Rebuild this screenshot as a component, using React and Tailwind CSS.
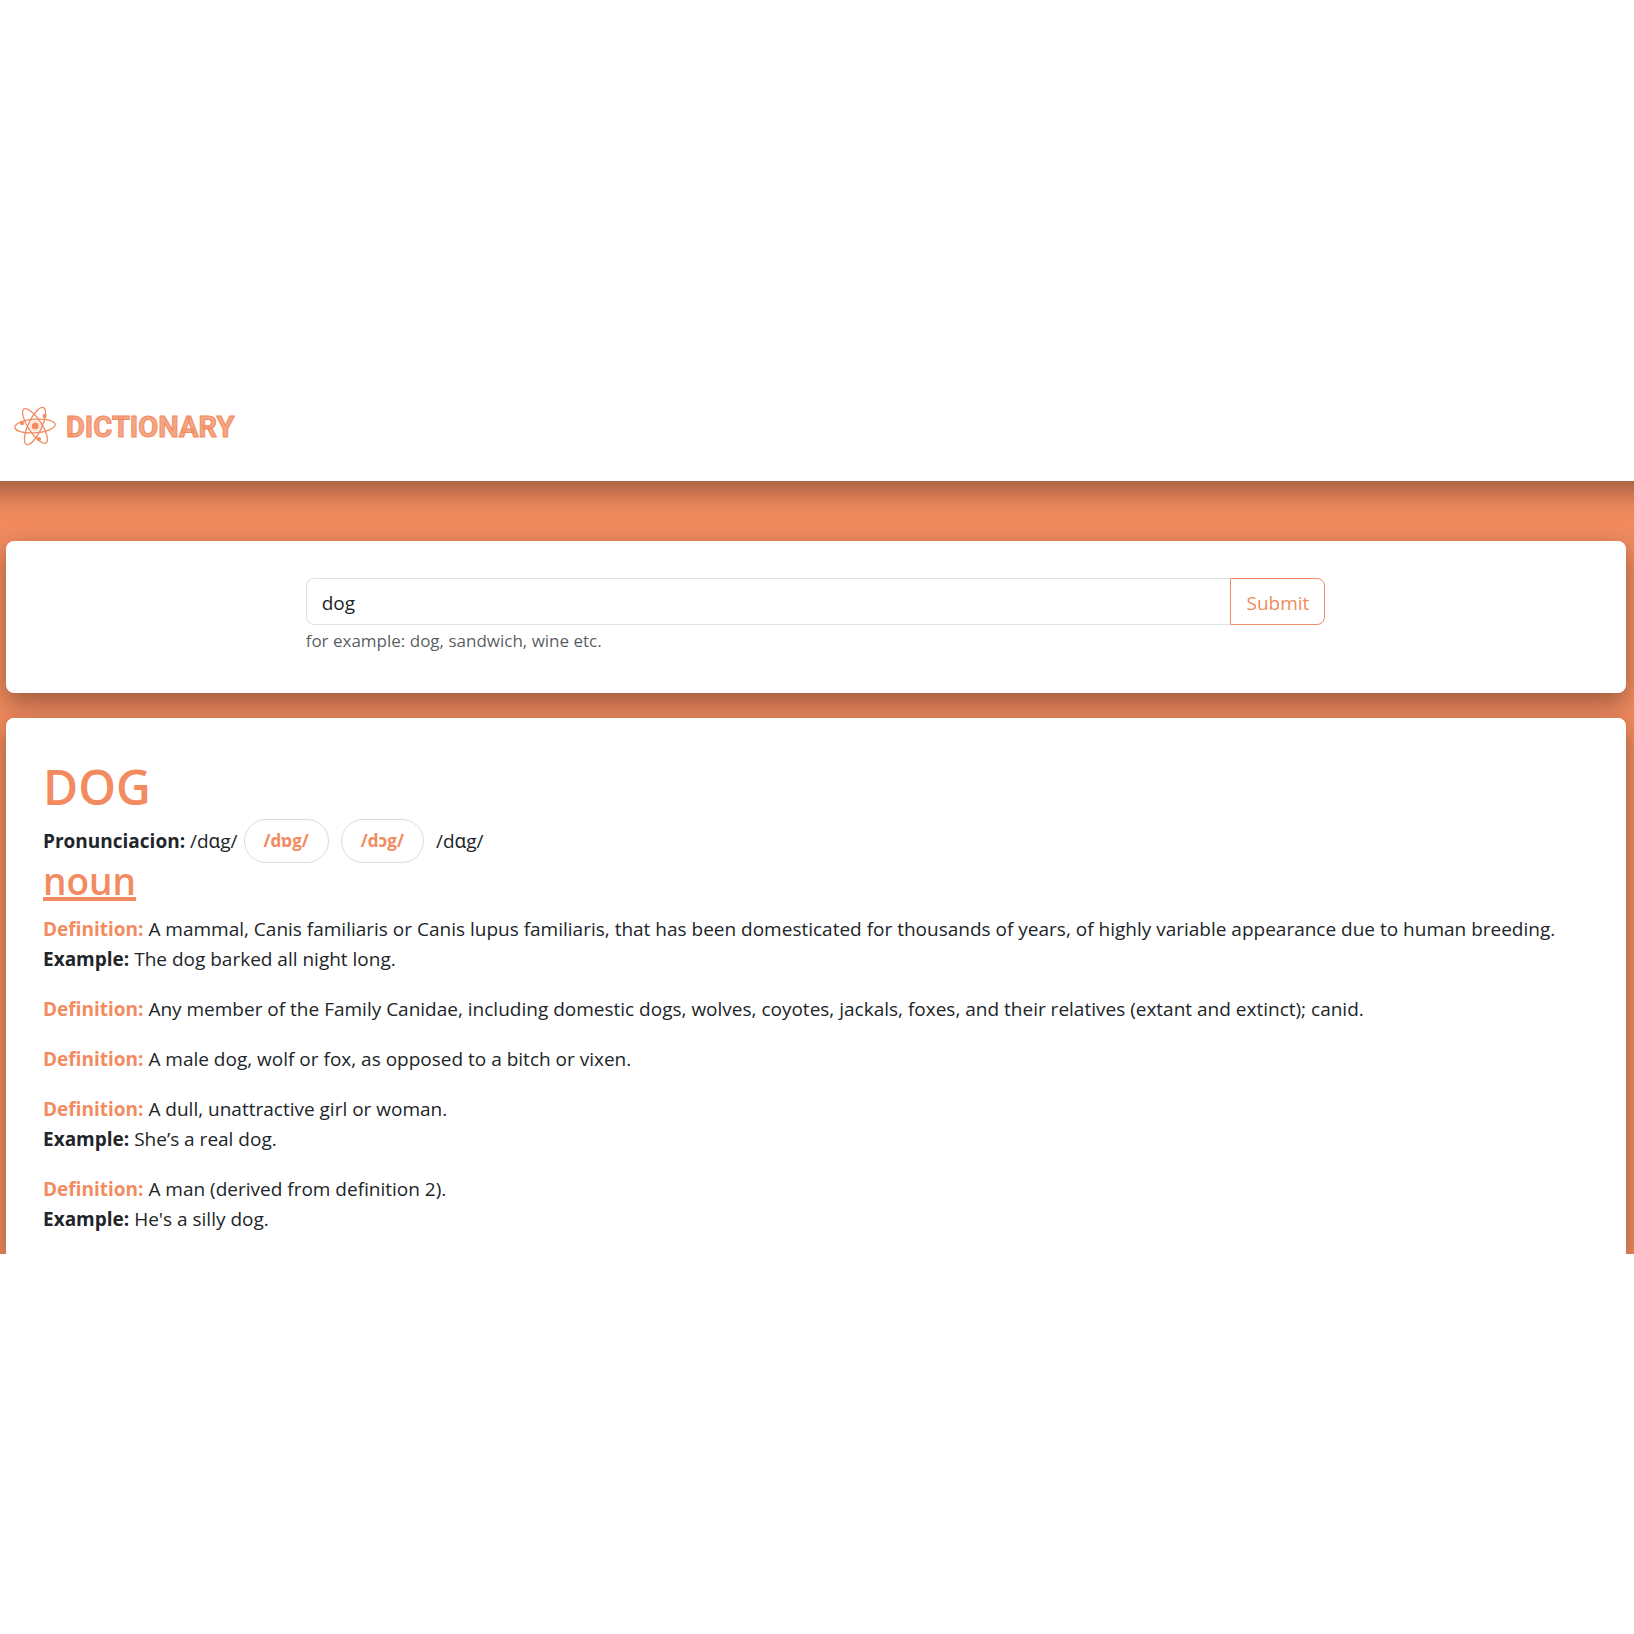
const entries = [
  {
    definition:
      "A mammal, Canis familiaris or Canis lupus familiaris, that has been domesticated for thousands of years, of highly variable appearance due to human breeding.",
    example: "The dog barked all night long.",
  },
  {
    definition:
      "Any member of the Family Canidae, including domestic dogs, wolves, coyotes, jackals, foxes, and their relatives (extant and extinct); canid.",
  },
  { definition: "A male dog, wolf or fox, as opposed to a bitch or vixen." },
  { definition: "A dull, unattractive girl or woman.", example: "She’s a real dog." },
  { definition: "A man (derived from definition 2).", example: "He's a silly dog." },
];

function AtomLogo() {
  return (
    <svg viewBox="0 0 42 42" className="h-[42px] w-[42px]" fill="none" stroke="#f28b60" strokeWidth="1.3" aria-hidden="true">
      <ellipse cx="21" cy="21" rx="20.2" ry="6.8" transform="rotate(-4 21 21)" />
      <ellipse cx="21" cy="21" rx="20.2" ry="6.8" transform="rotate(57 21 21)" />
      <ellipse cx="21" cy="21" rx="20.2" ry="6.8" transform="rotate(-65 21 21)" />
      <g fill="#f28b60" stroke="none">
        <circle cx="21.2" cy="21" r="3.5" />
        <circle cx="8" cy="18.2" r="2" />
        <circle cx="30.6" cy="11" r="2.1" />
        <circle cx="25" cy="34" r="2.1" />
      </g>
      <circle cx="21.2" cy="21" r="5" strokeWidth="0.6" strokeOpacity="0.7" />
    </svg>
  );
}

function Entry({ definition, example }) {
  return (
    <div className="mb-5">
      <p>
        <strong className="font-bold text-[#f28b60]">Definition:</strong> {definition}
      </p>
      {example && (
        <p>
          <strong className="font-bold">Example:</strong> {example}
        </p>
      )}
    </div>
  );
}

function SoundButton({ children }) {
  return (
    <button type="button" className="h-11 rounded-full border border-[#dcdcdc] px-[19px] text-[17px] font-bold text-[#f28b60]">
      {children}
    </button>
  );
}

export default function App() {
  return (
    <div className="flex min-h-screen flex-col justify-center bg-white pb-0.5 font-['Open_Sans','Noto_Sans',sans-serif] text-[19px] leading-[30px] text-[#212529]">
      <div className="overflow-hidden bg-[#f08a5e]">
        <header className="-mx-10 flex items-start gap-2.5 bg-white px-[54px] pt-[27px] pb-8 shadow-[0_10px_25px_rgba(0,0,0,0.35)]">
          <AtomLogo />
          <span className="font-['Roboto',sans-serif] text-[29px] leading-[44px] font-bold text-[#f5a684] [-webkit-text-stroke:1px_#f28b60]">
            DICTIONARY
          </span>
        </header>

        <main className="flex flex-col gap-[25px] pt-[60px] pr-2 pl-1.5">
          <section className="rounded-lg bg-white px-[37px] pt-[37px] pb-[39px] shadow-[0_10px_25px_rgba(0,0,0,0.35)]">
            <form className="mx-auto w-2/3 pr-1.5 pl-[5px]" onSubmit={(e) => e.preventDefault()}>
              <div className="flex h-[47px]">
                <input
                  type="text"
                  aria-label="Word"
                  defaultValue="dog"
                  className="min-w-0 flex-1 rounded-l-lg border border-r-0 border-[#dee2e6] px-[15px] pt-0.5 outline-none"
                />
                <button type="submit" className="rounded-r-lg border border-[#f28b60] px-[15px] pt-0.5 text-[#f28b60]">
                  Submit
                </button>
              </div>
              <p className="mt-0.5 text-[17px] leading-[27px] text-[#212529bf]">for example: dog, sandwich, wine etc.</p>
            </form>
          </section>

          <section className="rounded-t-lg bg-white px-[37px] pt-[37px] shadow-[0_10px_25px_rgba(0,0,0,0.35)]">
            <h1 className="text-5xl leading-[64px] font-semibold text-[#f28b60]">DOG</h1>
            <div className="flex items-center">
              <p className="mr-1.5">
                <strong className="font-bold">Pronunciacion:</strong> /dɑg/
              </p>
              <div className="flex gap-3">
                <SoundButton>/dɒg/</SoundButton>
                <SoundButton>/dɔg/</SoundButton>
                <span className="self-center">/dɑg/</span>
              </div>
            </div>
            <h2 className="mb-[15px] text-[37px] leading-9 font-semibold text-[#f28b60] underline decoration-4 underline-offset-2">noun</h2>
            {entries.map((entry) => (
              <Entry key={entry.definition} {...entry} />
            ))}
          </section>
        </main>
      </div>
    </div>
  );
}
